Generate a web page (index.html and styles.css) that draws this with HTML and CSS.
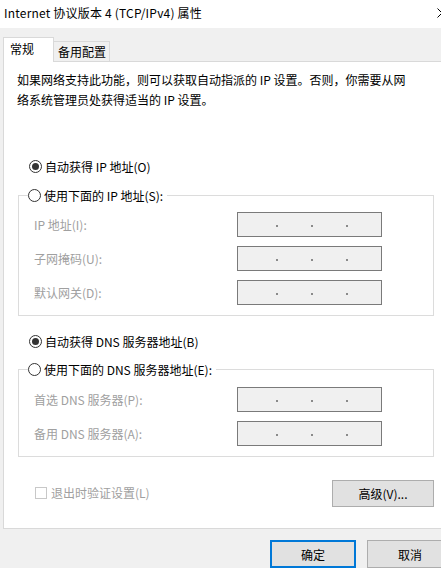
FILE: index.html
```html
<!DOCTYPE html>
<html lang="zh-CN">
<head>
<meta charset="utf-8">
<title>Internet 协议版本 4 (TCP/IPv4) 属性</title>
<link rel="stylesheet" href="styles.css">
</head>
<body>
<div class="window">
  <div class="titlebar">
    <span class="title">Internet 协议版本 4 (TCP/IPv4) 属性</span>
    <svg class="close" width="10" height="10" viewBox="0 0 10 10"><path d="M0.5 0.5 L9.5 9.5 M9.5 0.5 L0.5 9.5" stroke="#000" stroke-width="1" fill="none"/></svg>
  </div>
  <div class="tabs">
    <div class="tab active">常规</div>
    <div class="tab">备用配置</div>
  </div>
  <div class="panel">
    <p class="desc">如果网络支持此功能，则可以获取自动指派的 IP 设置。否则，你需要从网络系统管理员处获得适当的 IP 设置。</p>

    <div class="radio-row top-radio">
      <span class="radio checked"></span><span>自动获得 IP 地址(O)</span>
    </div>
    <div class="group group-ip">
      <div class="group-head">
        <span class="radio"></span><span>使用下面的 IP 地址(S):</span>
      </div>
      <div class="field">
        <span class="label">IP 地址(I):</span>
        <span class="ipbox"><i></i><i></i><i></i></span>
      </div>
      <div class="field">
        <span class="label">子网掩码(U):</span>
        <span class="ipbox"><i></i><i></i><i></i></span>
      </div>
      <div class="field">
        <span class="label">默认网关(D):</span>
        <span class="ipbox"><i></i><i></i><i></i></span>
      </div>
    </div>

    <div class="radio-row dns-radio">
      <span class="radio checked"></span><span>自动获得 DNS 服务器地址(B)</span>
    </div>
    <div class="group group-dns">
      <div class="group-head">
        <span class="radio"></span><span>使用下面的 DNS 服务器地址(E):</span>
      </div>
      <div class="field">
        <span class="label">首选 DNS 服务器(P):</span>
        <span class="ipbox"><i></i><i></i><i></i></span>
      </div>
      <div class="field">
        <span class="label">备用 DNS 服务器(A):</span>
        <span class="ipbox"><i></i><i></i><i></i></span>
      </div>
    </div>

    <div class="panel-foot">
      <label class="check"><span class="checkbox"></span><span>退出时验证设置(L)</span></label>
      <button class="btn advanced">高级(V)...</button>
    </div>
  </div>
  <div class="dialog-buttons">
    <button class="btn ok">确定</button>
    <button class="btn cancel">取消</button>
  </div>
</div>
</body>
</html>
```

FILE: styles.css
```css
html, body {
  margin: 0;
  padding: 0;
}
body {
  width: 441px;
  height: 568px;
  overflow: hidden;
  background: #f0f0f0;
  font-family: "Microsoft YaHei UI", "Noto Sans CJK SC", "Noto Sans", sans-serif;
  font-size: 12px;
  color: #000;
}
.window {
  width: 441px;
  height: 568px;
  overflow: hidden;
}
.titlebar {
  height: 28px;
  background: #fff;
  display: flex;
  align-items: center;
  justify-content: space-between;
  padding-left: 4px;
  box-sizing: border-box;
}
.title {
  line-height: 16px;
  margin-top: -3px;
  letter-spacing: 0.2px;
}
.close {
  flex: none;
  margin-right: -6px;
  margin-top: -3px;
}
.tabs {
  height: 33px;
  display: flex;
  align-items: flex-end;
  padding-left: 3px;
  box-sizing: border-box;
}
.tab {
  box-sizing: border-box;
  height: 20px;
  width: 56px;
  border-top: 1px solid #d9d9d9;
  border-right: 1px solid #d9d9d9;
  background: #f0f0f0;
  line-height: 19px;
  padding-left: 4px;
}
.tab.active {
  position: relative;
  z-index: 1;
  height: 25px;
  width: 51px;
  margin-bottom: -1px;
  background: #fff;
  border-left: 1px solid #d9d9d9;
  padding-left: 6px;
  line-height: 22px;
}
.panel {
  box-sizing: border-box;
  margin-left: 3px;
  width: 442px;
  height: 468px;
  background: #fff;
  border: 1px solid #d9d9d9;
  padding: 8px 0 0 13px;
}
.desc {
  margin: 0;
  width: 400px;
  line-height: 20px;
}
.radio-row, .group-head {
  display: flex;
  align-items: center;
  height: 20px;
  gap: 3px;
}
.radio-row {
  padding-left: 12px;
}
.top-radio {
  margin-top: 46px;
}
.radio {
  box-sizing: border-box;
  width: 13px;
  height: 13px;
  border: 1px solid #333;
  border-radius: 50%;
  background: #fff;
  display: flex;
  align-items: center;
  justify-content: center;
  flex: none;
}
.radio.checked::after {
  content: "";
  width: 7px;
  height: 7px;
  border-radius: 50%;
  background: #333;
}
.group {
  box-sizing: border-box;
  width: 416px;
  margin-left: 1px;
  border: 1px solid #dcdcdc;
  padding: 0 0 10px 15px;
  display: flex;
  flex-direction: column;
  gap: 9px;
}
.group-ip {
  margin-top: 19px;
}
.group-head {
  align-self: flex-start;
  margin: -11px 0 -2px -5px;
  padding: 0 4px 0 0;
  background: #fff;
}
.group-head .radio {
  margin-left: -1px;
}
.group-dns .group-head {
  margin-bottom: -1px;
}
.field {
  display: grid;
  grid-template-columns: 203px 145px;
  align-items: center;
  height: 25px;
}
.label {
  color: #a0a0a0;
}
.ipbox {
  box-sizing: border-box;
  height: 25px;
  border: 1px solid #7a7a7a;
  background: #f0f0f0;
  display: flex;
  align-items: center;
  padding: 2px 0 0 38px;
  gap: 33px;
}
.ipbox i {
  width: 2px;
  height: 2px;
  background: #8a8a8a;
}
.dns-radio {
  margin-top: 15px;
}
.group-dns {
  margin-top: 18px;
}
.panel-foot {
  width: 416px;
  margin: 23px 0 0 1px;
  display: flex;
  align-items: center;
  justify-content: space-between;
}
.check {
  display: flex;
  align-items: center;
  gap: 4px;
  padding-left: 17px;
  color: #a0a0a0;
  margin-top: -2px;
}
.checkbox {
  box-sizing: border-box;
  width: 12px;
  height: 12px;
  border: 1px solid #c8c8c8;
  background: #fff;
}
.btn {
  box-sizing: border-box;
  font: inherit;
  color: #000;
  background: #e1e1e1;
  border: 1px solid #adadad;
  height: 27px;
  padding: 0;
  margin: 0;
}
.advanced {
  width: 102px;
}
.dialog-buttons {
  display: flex;
  width: max-content;
  gap: 11px;
  padding: 11px 0 0 270px;
}
.ok {
  flex: none;
  width: 86px;
  height: 28px;
  border: 2px solid #0078d7;
}
.cancel {
  width: 86px;
  height: 28px;
  flex: none;
}
```
